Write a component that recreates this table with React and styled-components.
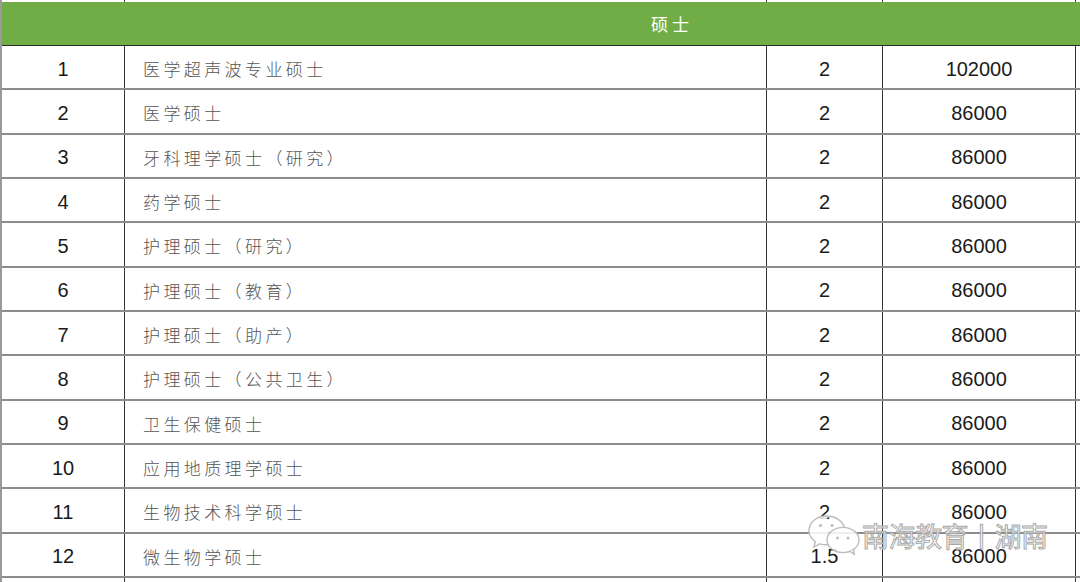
import React from 'react';
import styled, { createGlobalStyle } from 'styled-components';

const rows = [
  ['1', '医学超声波专业硕士', '2', '102000'],
  ['2', '医学硕士', '2', '86000'],
  ['3', '牙科理学硕士（研究）', '2', '86000'],
  ['4', '药学硕士', '2', '86000'],
  ['5', '护理硕士（研究）', '2', '86000'],
  ['6', '护理硕士（教育）', '2', '86000'],
  ['7', '护理硕士（助产）', '2', '86000'],
  ['8', '护理硕士（公共卫生）', '2', '86000'],
  ['9', '卫生保健硕士', '2', '86000'],
  ['10', '应用地质理学硕士', '2', '86000'],
  ['11', '生物技术科学硕士', '2', '86000'],
  ['12', '微生物学硕士', '1.5', '86000'],
];

// column widths (first one sits after the 2px left border)
const cols = [123, 642, 116, 193];

const App = () => (
  <>
    <GlobalStyle />
    <Page>
      <Sheet>
        <StubRow $h={2}>
          {cols.map((w, i) => <StubCell key={i} $w={w} />)}
        </StubRow>
        <HeaderRow>
          <HeaderTitle>硕士</HeaderTitle>
        </HeaderRow>
        {rows.map(([no, name, years, fee]) => (
          <Row key={no}>
            <NumCell $w={cols[0]}>{no}</NumCell>
            <NameCell $w={cols[1]}>{name}</NameCell>
            <NumCell $w={cols[2]}>{years}</NumCell>
            <NumCell $w={cols[3]}>{fee}</NumCell>
          </Row>
        ))}
        <StubRow $h={20}>
          {cols.map((w, i) => <StubCell key={i} $w={w} />)}
        </StubRow>
      </Sheet>
      <Watermark>
        <svg width="54" height="42" viewBox="0 0 54 42" fill="none" stroke="#bdbdbd" strokeWidth="1.4">
          <path d="M20 2C9.5 2 2 8.6 2 16.6c0 4.6 2.4 8.5 6.3 11.1L6.8 33l6-3.2c2.2.7 4.6 1 7.2 1 1 0 2-.1 3-.2" fill="rgba(255,255,255,0.85)" />
          <path d="M37.6 13.2C35 6.6 28.2 2 20 2" />
          <ellipse cx="36" cy="26" rx="16" ry="12.6" fill="rgba(255,255,255,0.85)" />
          <path d="M43 37.2l4.2 3.2-.8-5" fill="rgba(255,255,255,0.85)" />
          <circle cx="13.5" cy="11.5" r="1.6" fill="#bdbdbd" stroke="none" />
          <circle cx="25" cy="11.5" r="1.6" fill="#bdbdbd" stroke="none" />
          <circle cx="30.5" cy="24" r="1.5" fill="#bdbdbd" stroke="none" />
          <circle cx="41" cy="24" r="1.5" fill="#bdbdbd" stroke="none" />
        </svg>
        <WatermarkText>南海教育丨湖南</WatermarkText>
      </Watermark>
    </Page>
  </>
);

export default App;

const GlobalStyle = createGlobalStyle`
  html, body {
    margin: 0;
    padding: 0;
    background: #ffffff;
  }
  body {
    font-family: "Liberation Sans", Arial, sans-serif;
  }
`;

const Page = styled.div`
  position: relative;
  width: 1080px;
  height: 582px;
  overflow: hidden;
  background: #fff;
`;

const Sheet = styled.div`
  display: flex;
  flex-direction: column;
  width: 1084px;
  border-left: 2px solid #9a9a9a;
`;

const StubRow = styled.div`
  display: flex;
  height: ${p => p.$h}px;
`;

const StubCell = styled.div`
  width: ${p => p.$w}px;
  flex: none;
  border-right: 1px solid #333;
  box-sizing: border-box;
`;

const HeaderRow = styled.div`
  height: 44px;
  background: #70ad47;
  border-bottom: 1px solid #2a2a2a;
  box-sizing: border-box;
  position: relative;
`;

const HeaderTitle = styled.div`
  position: absolute;
  left: 649px;
  top: 11px;
  color: #ffffff;
  font-family: "Noto Sans CJK SC", sans-serif;
  font-size: 17px;
  letter-spacing: 4px;
  line-height: 22px;
`;

const Row = styled.div`
  display: flex;
  height: 44.33px;
  border-bottom: 2px solid #8c8c8c;
  box-sizing: border-box;
`;

const NumCell = styled.div`
  width: ${p => p.$w}px;
  flex: none;
  display: flex;
  align-items: center;
  justify-content: center;
  border-right: 1px solid #333;
  box-sizing: border-box;
  padding-top: 4px;
  font-family: "Liberation Sans", Arial, sans-serif;
  font-size: 20px;
  color: #1a1a1a;
`;

const NameCell = styled.div`
  width: ${p => p.$w}px;
  flex: none;
  display: flex;
  align-items: center;
  padding-left: 18px;
  padding-top: 3px;
  border-right: 1px solid #333;
  box-sizing: border-box;
  font-family: "Noto Sans CJK SC", sans-serif;
  font-weight: 300;
  font-size: 17px;
  letter-spacing: 3.4px;
  color: #555555;
`;

const Watermark = styled.div`
  position: absolute;
  left: 807px;
  top: 514px;
  display: flex;
  align-items: center;
`;

const WatermarkText = styled.span`
  font-family: "Noto Sans CJK SC", sans-serif;
  font-size: 27px;
  font-weight: 400;
  color: rgba(255, 255, 255, 0.7);
  -webkit-text-stroke: 1px #a8a8a8;
  margin-left: 1px;
  letter-spacing: -0.5px;
`;
